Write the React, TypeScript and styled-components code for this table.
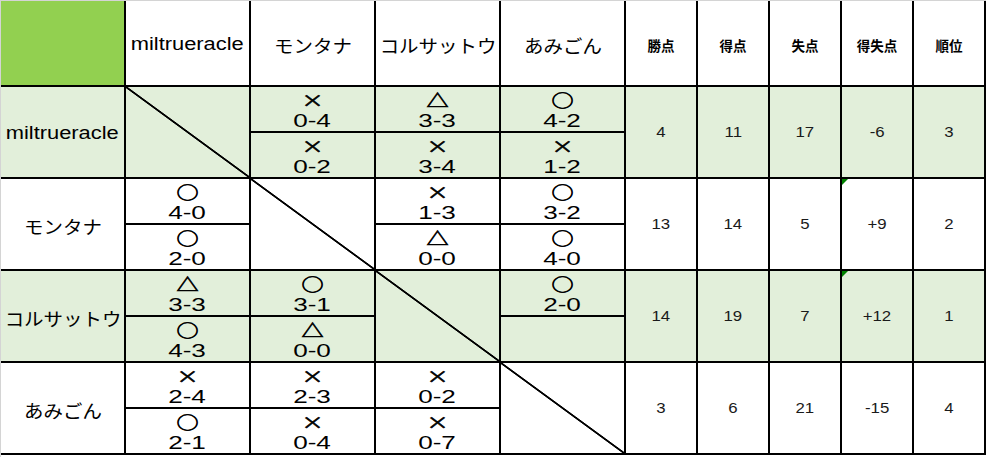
import React from "react";
import styled, { createGlobalStyle, css } from "styled-components";

const GlobalStyle = createGlobalStyle`
  html, body {
    margin: 0;
    padding: 0;
    background: #fff;
  }
  body {
    font-family: "Liberation Sans", "Noto Sans CJK JP", sans-serif;
    color: #000;
  }
`;

type Tone = "white" | "green" | "corner";

const toneColor: Record<Tone, string> = {
    white: "#ffffff",
    green: "#e2efda",
    corner: "#92d050",
};

const Page = styled.div`
    width: 986px;
    height: 457px;
    box-sizing: border-box;
    border-top: 1px solid #d4d4d4;
    border-left: 1px solid #d4d4d4;
    overflow: hidden;
`;

const Sheet = styled.div`
    display: grid;
    grid-template-columns: repeat(5, 123px) repeat(5, 70px);
    grid-template-rows: 84px repeat(4, 90px);
    gap: 2px;
    padding: 0 2px 2px 0;
    background: #000;
    width: max-content;
`;

const Cell = styled.div<{ $tone: Tone; $flag?: boolean }>`
    position: relative;
    background: ${(p) => toneColor[p.$tone]};
    display: flex;
    align-items: center;
    justify-content: center;
    overflow: hidden;
    ${(p) =>
        p.$flag &&
        css`
            &::before {
                content: "";
                position: absolute;
                top: 0;
                left: 0;
                border-top: 6px solid #008000;
                border-right: 6px solid transparent;
            }
        `}
`;

const DiagonalCell = styled.div<{ $tone: Tone }>`
    ${(p) => {
        const c = toneColor[p.$tone];
        return css`
            background: linear-gradient(
                to top right,
                ${c} calc(50% - 1.3px),
                #000 calc(50% - 0.6px),
                #000 calc(50% + 0.6px),
                ${c} calc(50% + 1.3px)
            );
        `;
    }}
`;

const MatchCell = styled.div`
    display: grid;
    grid-template-rows: 1fr 1fr;
    gap: 2px;
    background: #000;
`;

const Half = styled.div<{ $tone: Tone }>`
    background: ${(p) => toneColor[p.$tone]};
    display: flex;
    flex-direction: column;
    align-items: center;
    justify-content: center;
    padding-top: 2px;
    overflow: hidden;
`;

const Stretch = styled.span`
    display: inline-block;
    transform: scaleX(1.25);
    white-space: nowrap;
`;

const TeamName = styled(Stretch)<{ $latin?: boolean }>`
    font-family: ${(p) =>
        p.$latin
            ? `"Liberation Sans", sans-serif`
            : `"Noto Sans CJK JP", sans-serif`};
    font-size: ${(p) => (p.$latin ? "17.5px" : "18px")};
    transform: ${(p) => (p.$latin ? "scaleX(1.25)" : "scaleX(1.08)")};
    margin-top: 3px;
`;

const StatLabel = styled.span`
    font-family: "Noto Sans CJK JP", sans-serif;
    font-weight: 700;
    font-size: 13.5px;
    margin-top: 3px;
`;

const StatValue = styled(Stretch)`
    font-size: 14px;
    color: #1a1a1a;
    transform: scaleX(1.2);
`;

const Mark = styled(Stretch)`
    font-family: "Noto Sans CJK JP", sans-serif;
    font-size: 17px;
    line-height: 21px;
    -webkit-text-stroke: 0.6px #000;
    transform: scaleX(1.3);
`;

const Score = styled(Stretch)`
    font-size: 18px;
    line-height: 22px;
    transform: scaleX(1.45);
`;

type Game = [string, string];
type Row = {
    name: string;
    latin?: boolean;
    games: (Game[] | null)[];
    stats: string[];
};

const teams: { name: string; latin?: boolean }[] = [
    { name: "miltrueracle", latin: true },
    { name: "モンタナ" },
    { name: "コルサットウ" },
    { name: "あみごん" },
];

const statHeads = ["勝点", "得点", "失点", "得失点", "順位"];

const rows: Row[] = [
    {
        name: "miltrueracle",
        latin: true,
        games: [
            null,
            [["×", "0-4"], ["×", "0-2"]],
            [["△", "3-3"], ["×", "3-4"]],
            [["○", "4-2"], ["×", "1-2"]],
        ],
        stats: ["4", "11", "17", "-6", "3"],
    },
    {
        name: "モンタナ",
        games: [
            [["○", "4-0"], ["○", "2-0"]],
            null,
            [["×", "1-3"], ["△", "0-0"]],
            [["○", "3-2"], ["○", "4-0"]],
        ],
        stats: ["13", "14", "5", "+9", "2"],
    },
    {
        name: "コルサットウ",
        games: [
            [["△", "3-3"], ["○", "4-3"]],
            [["○", "3-1"], ["△", "0-0"]],
            null,
            [["○", "2-0"]],
        ],
        stats: ["14", "19", "7", "+12", "1"],
    },
    {
        name: "あみごん",
        games: [
            [["×", "2-4"], ["○", "2-1"]],
            [["×", "2-3"], ["×", "0-4"]],
            [["×", "0-2"], ["×", "0-7"]],
            null,
        ],
        stats: ["3", "6", "21", "-15", "4"],
    },
];

const App: React.FC = () => {
    return (
        <>
            <GlobalStyle />
            <Page>
                <Sheet>
                    <Cell $tone="corner" />
                    {teams.map((t) => (
                        <Cell key={t.name} $tone="white">
                            <TeamName $latin={t.latin}>{t.name}</TeamName>
                        </Cell>
                    ))}
                    {statHeads.map((h) => (
                        <Cell key={h} $tone="white">
                            <StatLabel>{h}</StatLabel>
                        </Cell>
                    ))}

                    {rows.map((row, ri) => {
                        const tone: Tone = ri % 2 === 0 ? "green" : "white";
                        return (
                            <React.Fragment key={row.name}>
                                <Cell $tone={tone}>
                                    <TeamName $latin={row.latin}>
                                        {row.name}
                                    </TeamName>
                                </Cell>
                                {row.games.map((g, gi) =>
                                    g === null ? (
                                        <DiagonalCell key={gi} $tone={tone} />
                                    ) : (
                                        <MatchCell key={gi}>
                                            {[0, 1].map((k) => (
                                                <Half key={k} $tone={tone}>
                                                    {g[k] && (
                                                        <>
                                                            <Mark>{g[k][0]}</Mark>
                                                            <Score>{g[k][1]}</Score>
                                                        </>
                                                    )}
                                                </Half>
                                            ))}
                                        </MatchCell>
                                    )
                                )}
                                {row.stats.map((s, si) => (
                                    <Cell
                                        key={si}
                                        $tone={tone}
                                        $flag={si === 3 && s.startsWith("+")}
                                    >
                                        <StatValue>{s}</StatValue>
                                    </Cell>
                                ))}
                            </React.Fragment>
                        );
                    })}
                </Sheet>
            </Page>
        </>
    );
};

export default App;
